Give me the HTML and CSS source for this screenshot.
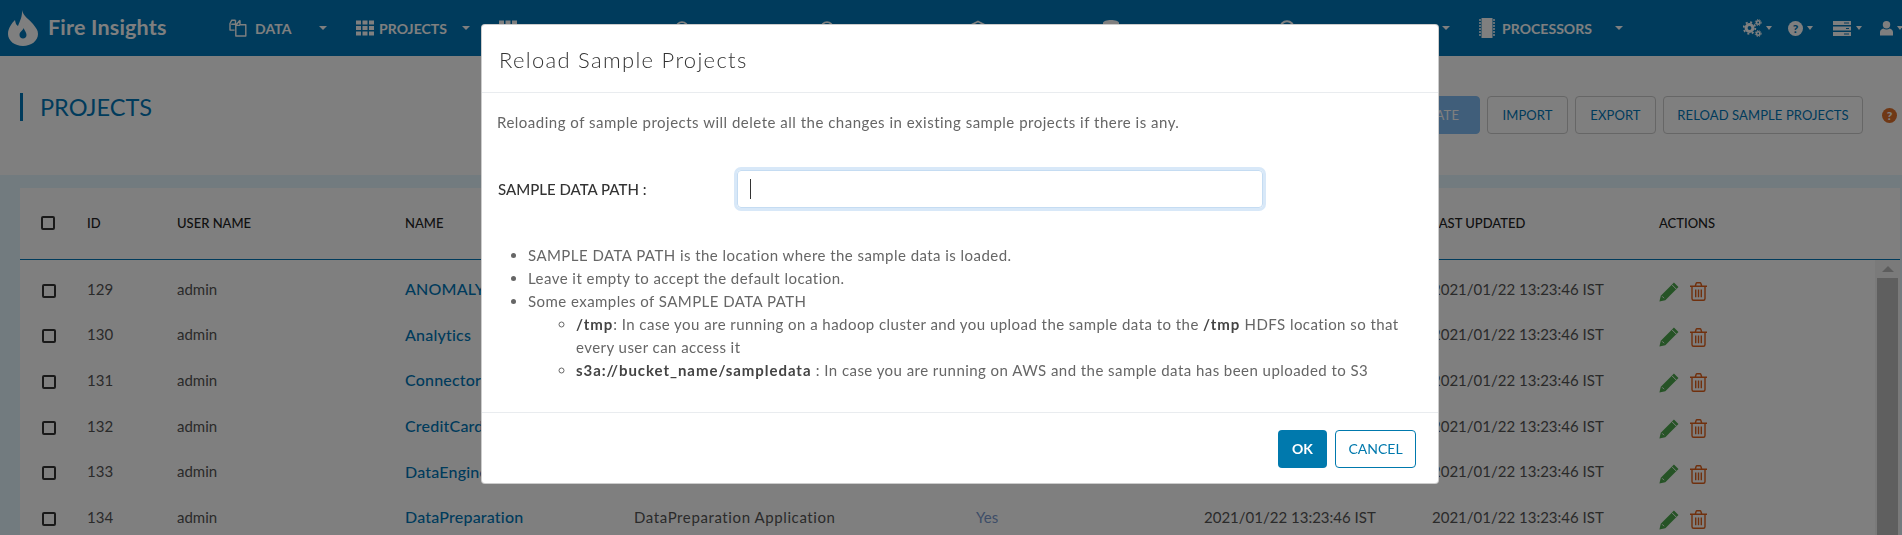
FILE: index.html
```html
<!DOCTYPE html>
<html lang="en">
<head>
<meta charset="utf-8">
<title>Fire Insights - Projects</title>
<link rel="stylesheet" href="styles.css">
</head>
<body>
<svg class="sprite" width="0" height="0" aria-hidden="true">
  <symbol id="i-files" viewBox="0 0 18 18"><path d="M6.5 1.2H2.8L1 4.5v6.6h4.6M6.5 1.2v4H2.2M11 1.2 6.8 6.2V17h10V5.8h-6M11 1.2V5.8M6.8 6.4H11" fill="none" stroke="currentColor" stroke-width="1.4" stroke-linejoin="round"/></symbol>
  <symbol id="i-grid" viewBox="0 0 18 15"><path d="M0 0h5v4H0zM6.500 0h5v4h-5zM13 0h5v4h-5zM0 5.500h5v4H0zM6.500 5.500h5v4h-5zM13 5.500h5v4h-5zM0 11h5v4H0zM6.500 11h5v4h-5zM13 11h5v4h-5z" fill="currentColor"/></symbol>
  <symbol id="i-clock" viewBox="0 0 16 16"><circle cx="8" cy="8" r="6.800" fill="none" stroke="currentColor" stroke-width="2"/><path d="M8 4v4.500h3.500" fill="none" stroke="currentColor" stroke-width="1.500"/></symbol>
  <symbol id="i-cube" viewBox="0 0 16 16"><path d="M8 .5 15 4v8l-7 3.500L1 12V4z" fill="none" stroke="currentColor" stroke-width="2"/><path d="M1.500 4.500 8 8l6.500-3.500M8 8v7" fill="none" stroke="currentColor" stroke-width="1.500"/></symbol>
  <symbol id="i-db" viewBox="0 0 16 16"><path d="M0 3c0-4 16-4 16 0v10c0 4-16 4-16 0z" fill="currentColor"/></symbol>
  <symbol id="i-chip" viewBox="0 0 16 20"><path d="M2.500 0h11v20h-11z" fill="currentColor"/><path d="M0 2h2M0 5h2M0 8h2M0 11h2M0 14h2M0 17h2M14 2h2M14 5h2M14 8h2M14 11h2M14 14h2M14 17h2" stroke="currentColor" stroke-width="1.300" fill="none"/></symbol>
  <symbol id="i-gears" viewBox="0 0 19 18"><g fill="none" stroke="currentColor"><circle cx="6.500" cy="9" r="3.400" stroke-width="3"/><circle cx="6.500" cy="9" r="5.800" stroke-width="1.800" stroke-dasharray="2 2.550"/><circle cx="15.200" cy="3.500" r="1.700" stroke-width="1.600"/><circle cx="15.200" cy="3.500" r="3" stroke-width="1" stroke-dasharray="1.300 1.200"/><circle cx="15.200" cy="14.500" r="1.700" stroke-width="1.600"/><circle cx="15.200" cy="14.500" r="3" stroke-width="1" stroke-dasharray="1.300 1.200"/></g></symbol>
  <symbol id="i-server" viewBox="0 0 18 15"><path d="M0 0h18v4H0zM0 5.500h18v4H0zM0 11h18v4H0z" fill="currentColor"/><path d="M11 2h5M13 7.500h3M11 13h5" stroke="#0077b8" stroke-width="1"/></symbol>
  <symbol id="i-user" viewBox="0 0 14 16"><circle cx="7" cy="4.500" r="4" fill="currentColor"/><path d="M0 16v-3.500C0 10 2 9 3.500 8.500c2 1.500 5 1.500 7 0C12 9 14 10 14 12.500V16z" fill="currentColor"/></symbol>
  <symbol id="i-pencil" viewBox="0 0 19 19"><path d="M14.200.5 18.500 4.800 6 17.300.4 18.600 1.700 13z" fill="currentColor"/><path d="M12.200 2.500l4.300 4.300M3 13.600 4.800 15.400" stroke="#fff" stroke-width=".9" fill="none"/></symbol>
  <symbol id="i-trash" viewBox="0 0 17 19"><path d="M0 4.300h17M2 4.300V16.500c0 1.100.7 1.800 1.600 1.800h9.800c.9 0 1.600-.7 1.600-1.800V4.300M5.200 4.300 6.200 1.200c.1-.3.400-.5.700-.5h3.200c.3 0 .6.200.7.500l1 3.100M5.700 7.500v7.800M8.500 7.500v7.800M11.300 7.500v7.800" fill="none" stroke="currentColor" stroke-width="1.400"/></symbol>
</svg>

<div class="page">
  <header class="navbar">
    <div class="brand">
      <svg class="brand-logo" viewBox="0 0 30 36"><path fill-rule="evenodd" d="M14 0C15 6 21 9 25 14 28 18 30 20 30 24 30 31 23 36 15 36S0 31 0 24C0 18 4 13 7 10 7.500 13 8 15 10 16 12 11 14.500 6 14 0zM15.500 18C15 20.500 11.500 21.500 11.500 25 11.500 27 13 28.500 15 28.500S18.500 27 18.500 25C18.500 22.500 16.500 20.500 15.500 18z" fill="currentColor"/></svg>
      <span class="brand-name">Fire Insights</span>
    </div>
    <nav class="menu">
      <a class="menu-item"><svg class="mi mi-18"><use href="#i-files"/></svg><span class="ml ml-wide">DATA</span><i class="caret"></i></a>
      <a class="menu-item"><svg class="mi mi-18"><use href="#i-grid"/></svg><span class="ml ml-tight">PROJECTS</span><i class="caret"></i></a>
      <a class="menu-item"><svg class="mi mi-18"><use href="#i-grid"/></svg><span class="ml ml-tight">APPLICATIONS</span><i class="caret"></i></a>
      <a class="menu-item"><svg class="mi mi-14"><use href="#i-clock"/></svg><span class="ml">SCHEDULER</span><i class="caret"></i></a>
      <a class="menu-item"><svg class="mi mi-14"><use href="#i-clock"/></svg><span class="ml">EXECUTIONS</span><i class="caret"></i></a>
      <a class="menu-item"><svg class="mi mi-14"><use href="#i-cube"/></svg><span class="ml">MODELS</span><i class="caret"></i></a>
      <a class="menu-item"><svg class="mi mi-16"><use href="#i-db"/></svg><span class="ml">DATA CATALOG</span><i class="caret"></i></a>
      <a class="menu-item"><svg class="mi mi-16"><use href="#i-clock"/></svg><span class="ml">ADMINISTRATION</span><i class="caret"></i></a>
      <a class="menu-item menu-item-last"><svg class="mi mi-16 mi-tall"><use href="#i-chip"/></svg><span class="ml">PROCESSORS</span><i class="caret"></i></a>
    </nav>
    <div class="tools">
      <a class="tool"><svg class="ti ti-gears"><use href="#i-gears"/></svg><i class="caret caret-sm"></i></a>
      <a class="tool"><span class="help-dot">?</span><i class="caret caret-sm"></i></a>
      <a class="tool"><svg class="ti ti-server"><use href="#i-server"/></svg><i class="caret caret-sm caret-far"></i></a>
      <a class="tool"><svg class="ti ti-user"><use href="#i-user"/></svg><i class="caret caret-sm"></i></a>
    </div>
  </header>

  <section class="titlebar">
    <h1 class="page-title">PROJECTS</h1>
    <div class="actions">
      <button class="btn btn-solid">CREATE</button>
      <button class="btn">IMPORT</button>
      <button class="btn">EXPORT</button>
      <button class="btn btn-reload">RELOAD SAMPLE PROJECTS</button>
      <span class="help-dot help-orange">?</span>
    </div>
  </section>

  <section class="card">
    <div class="row row-head">
      <span class="check"></span><span>ID</span><span>USER NAME</span><span>NAME</span><span></span><span></span><span></span><span>LAST UPDATED</span><span>ACTIONS</span>
    </div>
    <div class="card-body">
      <div class="rows">
        <div class="row"><span class="check"></span><span>129</span><span>admin</span><a class="link">ANOMALY</a><span></span><span></span><span></span><span>2021/01/22 13:23:46 IST</span><span class="row-actions"><svg class="act-pencil"><use href="#i-pencil"/></svg><svg class="act-trash"><use href="#i-trash"/></svg></span></div>
        <div class="row"><span class="check"></span><span>130</span><span>admin</span><a class="link">Analytics</a><span></span><span></span><span></span><span>2021/01/22 13:23:46 IST</span><span class="row-actions"><svg class="act-pencil"><use href="#i-pencil"/></svg><svg class="act-trash"><use href="#i-trash"/></svg></span></div>
        <div class="row"><span class="check"></span><span>131</span><span>admin</span><a class="link">Connectors</a><span></span><span></span><span></span><span>2021/01/22 13:23:46 IST</span><span class="row-actions"><svg class="act-pencil"><use href="#i-pencil"/></svg><svg class="act-trash"><use href="#i-trash"/></svg></span></div>
        <div class="row"><span class="check"></span><span>132</span><span>admin</span><a class="link">CreditCard</a><span></span><span></span><span></span><span>2021/01/22 13:23:46 IST</span><span class="row-actions"><svg class="act-pencil"><use href="#i-pencil"/></svg><svg class="act-trash"><use href="#i-trash"/></svg></span></div>
        <div class="row"><span class="check"></span><span>133</span><span>admin</span><a class="link">DataEngine</a><span></span><span></span><span></span><span>2021/01/22 13:23:46 IST</span><span class="row-actions"><svg class="act-pencil"><use href="#i-pencil"/></svg><svg class="act-trash"><use href="#i-trash"/></svg></span></div>
        <div class="row"><span class="check"></span><span>134</span><span>admin</span><a class="link">DataPreparation</a><span class="desc">DataPreparation Application</span><span class="yes">Yes</span><span>2021/01/22 13:23:46 IST</span><span>2021/01/22 13:23:46 IST</span><span class="row-actions"><svg class="act-pencil"><use href="#i-pencil"/></svg><svg class="act-trash"><use href="#i-trash"/></svg></span></div>
      </div>
      <div class="scrollbar"><i class="sb-arrow"></i><i class="sb-thumb"></i></div>
    </div>
  </section>
</div>

<div class="backdrop"></div>
<div class="modal-wrap">
  <div class="modal">
    <div class="modal-head"><h2 class="modal-title">Reload Sample Projects</h2></div>
    <div class="modal-body">
      <p class="intro">Reloading of sample projects will delete all the changes in existing sample projects if there is any.</p>
      <div class="field">
        <label class="field-label">SAMPLE DATA PATH :</label>
        <div class="field-input"><i class="text-caret"></i></div>
      </div>
      <ul class="notes">
        <li>SAMPLE DATA PATH is the location where the sample data is loaded.</li>
        <li>Leave it empty to accept the default location.</li>
        <li>Some examples of SAMPLE DATA PATH
          <ul class="subnotes">
            <li><b>/tmp</b>: In case you are running on a hadoop cluster and you upload the sample data to the <b>/tmp</b> HDFS location so that every user can access it</li>
            <li><b>s3a://bucket_name/sampledata</b> : In case you are running on AWS and the sample data has been uploaded to S3</li>
          </ul>
        </li>
      </ul>
    </div>
    <div class="modal-foot">
      <button class="mbtn mbtn-ok">OK</button>
      <button class="mbtn mbtn-cancel">CANCEL</button>
    </div>
  </div>
</div>
</body>
</html>
```
FILE: styles.css
```css
* { box-sizing: border-box; }
html, body { margin: 0; height: 100%; overflow: hidden; }
body {
  font-family: "Lato", "Open Sans", sans-serif;
  font-size: 15px;
  color: #555;
  background: #e5f6ff;
}
.sprite { position: absolute; }
svg { display: block; }
i { display: block; }

.page { height: 535px; overflow: hidden; }

/* navbar */
.navbar {
  height: 56px;
  background: #0077b8;
  color: #fff;
  display: flex;
  align-items: center;
}
.brand { width: 229px; padding-left: 8px; display: flex; align-items: center; gap: 10px; flex: none; }
.brand-logo { width: 30px; height: 36px; }
.brand-name { font-size: 21.500px; font-weight: 700; letter-spacing: .2px; position: relative; top: -1px; }
.menu {
  display: grid;
  grid-template-columns: 127px 143px 176px 145px 151px 132px 176px 200px 170px;
  flex: none;
}
.menu-item { display: flex; align-items: center; padding-right: 29px; font-size: 14px; font-weight: 700; letter-spacing: .05px; }
.menu-item-last { padding-right: 26px; }
.mi { flex: none; height: 16px; }
.mi-18 { width: 18px; height: 18px; }
.mi-14 { width: 14px; }
.mi-16 { width: 16px; }
.mi-tall { height: 20px; }
.ml { margin-left: 7px; white-space: nowrap; }
.ml-wide { margin-left: 8px; }
.ml-tight { margin-left: 5px; }
.caret {
  margin-left: auto;
  flex: none;
  width: 0;
  height: 0;
  border-left: 4px solid transparent;
  border-right: 4px solid transparent;
  border-top: 4px solid currentColor;
}
.caret-sm { margin-left: 4px; border-left-width: 3.500px; border-right-width: 3.500px; }
.caret-far { margin-left: 5px; }
.tools {
  margin-left: 94px;
  display: grid;
  grid-template-columns: 45px 45px 47px auto;
  align-items: center;
  flex: none;
}
.tool { display: flex; align-items: center; }
.ti-gears { width: 19px; height: 18px; }
.ti-server { width: 18px; height: 15px; }
.ti-user { width: 13px; height: 16px; }
.help-dot {
  width: 15px;
  height: 15px;
  border-radius: 50%;
  background: #fff;
  color: #0077b8;
  font-size: 12px;
  font-weight: 900;
  line-height: 15px;
  text-align: center;
  flex: none;
}

/* title band */
.titlebar {
  height: 119px;
  background: #fff;
  display: flex;
  align-items: flex-start;
  justify-content: space-between;
  padding: 37px 5px 0 20px;
}
.page-title {
  margin: 0;
  height: 28px;
  border-left: 3px solid #0077b8;
  padding-left: 17px;
  font-size: 23.500px;
  font-weight: 400;
  line-height: 28px;
  color: #0077b8;
}
.actions { display: flex; align-items: center; gap: 7px; margin-top: 3px; }
.btn {
  height: 38px;
  padding: 0;
  width: 81px;
  font: 400 13px "Lato", sans-serif;
  letter-spacing: .1px;
  white-space: nowrap;
  color: #0077b8;
  background: #fff;
  border: 1px solid #ccc;
  border-radius: 4px;
}
.btn-solid { width: 90px; background: #80bcf5; border-color: #80bcf5; color: #fff; }
.btn-reload { width: 200px; }
.help-orange { background: #e0702a; color: #fff; margin-left: 12px; }

/* table card */
.card { margin: 13px 2px 0 20px; background: #fff; }
.row {
  display: grid;
  grid-template-columns: 46px 90px 228px 229px 342px 228px 228px 227px 1fr;
  align-items: center;
  padding-left: 21px;
  height: 45.600px;
  white-space: nowrap;
}
.row-head {
  height: 72px;
  padding-bottom: 2px;
  border-bottom: 1px solid #0077b8;
  font-size: 13px;
  color: #222;
  font-weight: 500;
}
.card-body { display: flex; }
.rows { flex: 1; padding-top: 6px; min-width: 0; }
.rows .check { margin: 4px 0 0 1px; }
.link { color: #0077b8; font-size: 16px; font-weight: 500; letter-spacing: .2px; }
.desc { letter-spacing: .6px; }
.yes { color: #7a9bd0; }
.check { width: 14px; height: 14px; border: 2px solid #333; border-radius: 2px; background: #fff; }
.row-actions { display: flex; align-items: center; gap: 11px; padding-top: 6px; }
.act-pencil { width: 20px; height: 20px; color: #4ca64c; }
.act-trash { width: 17px; height: 19px; color: #e0601a; }
.scrollbar { width: 25px; flex: none; background: #f5f5f5; padding: 6px 2px 0; height: 300px; }
.sb-arrow { width: 0; height: 0; margin: 0 auto 6px; border-left: 6px solid transparent; border-right: 6px solid transparent; border-bottom: 6px solid #bbb; }
.sb-thumb { height: 260px; background: #bebebe; }

/* modal */
.backdrop { position: fixed; inset: 0; background: rgba(0,0,0,.5); }
.modal-wrap { position: fixed; top: 24px; left: 481px; }
.modal {
  width: 958px;
  height: 460px;
  background: #fff;
  border: 1px solid rgba(0,0,0,.2);
  border-radius: 4px;
  display: flex;
  flex-direction: column;
  color: #666;
}
.modal-head { height: 68px; border-bottom: 1px solid #e9ecef; padding: 0 17px; display: flex; align-items: center; }
.modal-title { margin: 0; font-size: 22px; font-weight: 300; color: #333; letter-spacing: 1.300px; position: relative; top: 1px; }
.modal-body { flex: 1; padding: 18px 15px 0; font-size: 15px; font-weight: 400; }
.intro { margin: 0; line-height: 22px; letter-spacing: .5px; }
.field { display: flex; align-items: center; margin-top: 37px; }
.field-label { width: 240px; padding-left: 1px; font-size: 15px; font-weight: 500; color: #333; }
.field-input {
  width: 526px;
  height: 38px;
  border: 1px solid #c5dcf2;
  border-radius: 4px;
  box-shadow: 0 0 0 3px #d8e8f8;
  padding: 8px 12px;
}
.text-caret { width: 1px; height: 20px; background: #333; }
.notes { margin: 36px 0 0; padding-left: 31px; line-height: 23px; letter-spacing: .45px; }
.subnotes { margin: 0; padding-left: 48px; list-style: circle; }
.subnotes b { font-weight: 700; font-size: 15px; letter-spacing: .95px; color: #444; }
.modal-foot { height: 71px; border-top: 1px solid #e9ecef; display: flex; align-items: center; justify-content: flex-end; gap: 8px; padding-right: 22px; padding-top: 1px; }
.mbtn { height: 38px; border-radius: 4px; font: 700 14px "Lato", sans-serif; }
.mbtn-ok { width: 49px; background: #0079ad; color: #fff; border: 0; }
.mbtn-cancel { width: 81px; background: #fff; color: #0079ad; border: 1px solid #0079ad; font-weight: 400; }
```
